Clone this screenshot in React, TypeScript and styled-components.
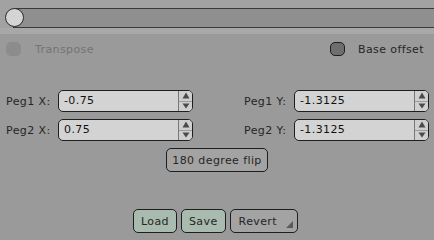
import React from 'react';
import styled, { createGlobalStyle } from 'styled-components';

const GlobalStyle = createGlobalStyle`
  html, body {
    margin: 0;
    padding: 0;
    background: #9a9a9a;
  }
  body {
    font-family: 'DejaVu Sans', sans-serif;
    font-size: 11px;
    letter-spacing: 0.4px;
    color: #262626;
  }
`;

const pegs = [
  { label: 'Peg1 X:', value: '-0.75', label2: 'Peg1 Y:', value2: '-1.3125' },
  { label: 'Peg2 X:', value: '0.75', label2: 'Peg2 Y:', value2: '-1.3125' },
];

const Spin = ({ value }: { value: string }) => (
  <SpinBox>
    <SpinValue>{value}</SpinValue>
    <SpinButtons>
      <SpinArrow>
        <svg width="8" height="7" viewBox="0 0 8 7">
          <path d="M4 0.5 L7.5 6.5 L0.5 6.5 Z" fill="#4a4a4a" />
        </svg>
      </SpinArrow>
      <SpinArrow $bottom>
        <svg width="8" height="6" viewBox="0 0 8 6">
          <path d="M0.5 0.5 L7.5 0.5 L4 5.5 Z" fill="#4a4a4a" />
        </svg>
      </SpinArrow>
    </SpinButtons>
  </SpinBox>
);

const App = () => {
  return (
    <Page>
      <GlobalStyle />
      <SliderBar>
        <Track>
          <Thumb />
        </Track>
      </SliderBar>
      <Divider />
      <Panel>
        <CheckRow>
          <Check>
            <Box $disabled />
            <CheckLabel $disabled>Transpose</CheckLabel>
          </Check>
          <Check>
            <Box />
            <CheckLabel>Base offset</CheckLabel>
          </Check>
        </CheckRow>
        <Fields>
          {pegs.map((p) => (
            <FieldRow key={p.label}>
              <Label>{p.label}</Label>
              <Spin value={p.value} />
              <Label $right>{p.label2}</Label>
              <Spin value={p.value2} />
            </FieldRow>
          ))}
        </Fields>
        <Center>
          <Button $pad={5}>180 degree flip</Button>
        </Center>
        <Footer>
          <Button $tint>Load</Button>
          <Button $tint>Save</Button>
          <Button $menu>Revert</Button>
        </Footer>
      </Panel>
    </Page>
  );
};

const Page = styled.div`
  width: 434px;
  height: 240px;
  overflow: hidden;
  display: flex;
  flex-direction: column;
`;

const SliderBar = styled.div`
  height: 28px;
  background: #a2a2a2;
  padding: 8px 0 0 13px;
  box-sizing: border-box;
`;

const Track = styled.div`
  position: relative;
  height: 20px;
  box-sizing: border-box;
  border-top: 1px solid #3a3a3a;
  border-bottom: 1px solid #3a3a3a;
  background: #8f8f8f;
`;

const Thumb = styled.div`
  position: absolute;
  left: -8px;
  top: -1px;
  width: 19px;
  height: 19px;
  box-sizing: border-box;
  border-radius: 50%;
  border: 1px solid #2a2a2a;
  background: #d4d4d4;
`;

const Divider = styled.div`
  height: 6px;
  background: #a8a8a8;
`;

const Panel = styled.div`
  flex: 1;
  display: flex;
  flex-direction: column;
  background: #9a9a9a;
`;

const CheckRow = styled.div`
  display: flex;
  justify-content: space-between;
  align-items: center;
  padding: 8px 10px 0 6px;
  height: 14px;
`;

const Check = styled.div`
  display: flex;
  align-items: center;
  gap: 13px;
`;

const Box = styled.div<{ $disabled?: boolean }>`
  width: 15px;
  height: 14px;
  box-sizing: border-box;
  border-radius: 5px;
  background: ${(p) => (p.$disabled ? '#8c8c8c' : '#6e6e6e')};
  border: 1px solid ${(p) => (p.$disabled ? '#8c8c8c' : '#1e1e1e')};
`;

const CheckLabel = styled.span<{ $disabled?: boolean }>`
  color: ${(p) => (p.$disabled ? '#747474' : '#262626')};
  margin-left: ${(p) => (p.$disabled ? '1px' : '0')};
`;

const Fields = styled.div`
  display: flex;
  flex-direction: column;
  gap: 7px;
  margin-top: 34px;
  padding-left: 6px;
`;

const FieldRow = styled.div`
  display: grid;
  grid-template-columns: 52px 135px 51px 50px 135px;
  align-items: center;
  height: 22px;
`;

const Label = styled.span<{ $right?: boolean }>`
  grid-column: ${(p) => (p.$right ? 'span 2' : 'auto')};
  justify-self: ${(p) => (p.$right ? 'end' : 'start')};
  width: ${(p) => (p.$right ? '50px' : 'auto')};
`;

const SpinBox = styled.div`
  display: flex;
  height: 22px;
  box-sizing: border-box;
  border: 1px solid #1e1e1e;
  border-radius: 5px;
  background: #d3d3d3;
  overflow: hidden;
`;

const SpinValue = styled.span`
  flex: 1;
  padding-left: 5px;
  line-height: 20px;
  color: #111;
`;

const SpinButtons = styled.div`
  width: 13px;
  display: flex;
  flex-direction: column;
  border-left: 1px solid #777;
`;

const SpinArrow = styled.div<{ $bottom?: boolean }>`
  flex: 1;
  display: flex;
  align-items: center;
  justify-content: center;
  background: #cfcfcf;
  border-top: ${(p) => (p.$bottom ? '1px solid #9a9a9a' : 'none')};
`;

const Center = styled.div`
  display: flex;
  justify-content: center;
  margin-top: 7px;
`;

const Button = styled.div<{ $tint?: boolean; $menu?: boolean; $pad?: number }>`
  position: relative;
  height: 24px;
  box-sizing: border-box;
  padding: 0 ${(p) => (p.$menu ? 20 : p.$pad ?? 7)}px 0 ${(p) => (p.$menu ? 8 : p.$pad ?? 7)}px;
  display: flex;
  align-items: center;
  border: 1px solid #1e1e1e;
  border-radius: 5px;
  background: ${(p) => (p.$tint ? '#a8bbae' : '#a3a3a3')};
  color: #262626;
  &::after {
    content: '';
    display: ${(p) => (p.$menu ? 'block' : 'none')};
    position: absolute;
    right: 4px;
    bottom: 4px;
    width: 0;
    height: 0;
    border-left: 7px solid transparent;
    border-bottom: 7px solid #5a5a5a;
  }
`;

const Footer = styled.div`
  display: flex;
  justify-content: center;
  gap: 4px;
  margin-top: 37px;
  padding-right: 3px;
`;

export default App;
